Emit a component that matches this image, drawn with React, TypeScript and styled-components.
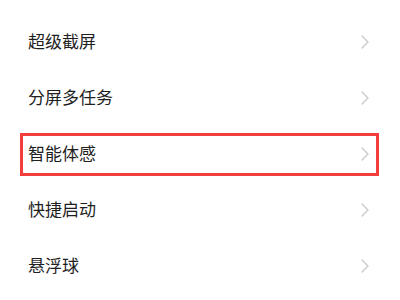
import React from "react";
import styled, { createGlobalStyle } from "styled-components";

const Global = createGlobalStyle`
  html, body { margin: 0; padding: 0; background: #ffffff; }
  body { font-family: "Noto Sans CJK SC", "Noto Sans", sans-serif; }
`;

const List = styled.div`
  width: 400px;
  height: 300px;
  padding-top: 14px;
  box-sizing: border-box;
  background: #ffffff;
  overflow: hidden;
`;

const Row = styled.div`
  position: relative;
  height: 56px;
  display: flex;
  align-items: center;
  justify-content: space-between;
  padding: 0 31px 0 28px;
`;

const Label = styled.span`
  font-size: 17px;
  color: #1f1f1f;
  line-height: 1;
  margin-top: -3px;
`;

const Highlight = styled.div`
  position: absolute;
  left: 20px;
  right: 21px;
  top: 7px;
  bottom: 6px;
  border: 3px solid #f23d3d;
  pointer-events: none;
`;

const Chevron = () => (
  <svg width="8" height="14" viewBox="0 0 8 14" fill="none">
    <path d="M1 1 L7 7 L1 13" stroke="#c9c9c9" strokeWidth="1.3" strokeLinecap="round" strokeLinejoin="round" />
  </svg>
);

const items = ["超级截屏", "分屏多任务", "智能体感", "快捷启动", "悬浮球"];

export default function App() {
  return (
    <>
      <Global />
      <List>
        {items.map((t, i) => (
          <Row key={t}>
            <Label>{t}</Label>
            <Chevron />
            {i === 2 && <Highlight />}
          </Row>
        ))}
      </List>
    </>
  );
}
